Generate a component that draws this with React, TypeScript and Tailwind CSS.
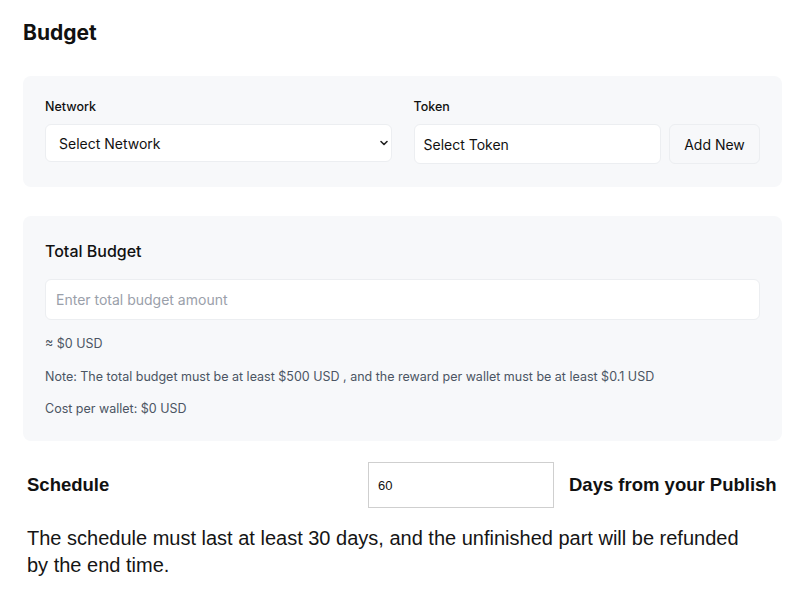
import React, { useState } from 'react';

const App: React.FC = () => {
  const [days, setDays] = useState('60');

  return (
    <div className="min-h-screen bg-white pl-[23px] pr-[17px] pt-[19px] text-[#111] font-['Inter',sans-serif]">
      <h1 className="text-[21px] leading-[28px] font-bold">Budget</h1>

      <div className="mt-[29px] rounded-lg bg-[#f7f8fa] px-[22px] pt-[23px] pb-[23px]">
        <div className="grid grid-cols-2 gap-[22px]">
          <div>
            <label className="block text-[12.5px] leading-4 font-medium mb-[9px]">Network</label>
            <div className="relative">
              <select className="w-full h-[38px] appearance-none rounded-md border border-[#eceef1] bg-white pl-[13px] pr-8 text-[14px] text-[#111] outline-none">
                <option>Select Network</option>
              </select>
              <svg className="pointer-events-none absolute right-[3px] top-1/2 -translate-y-1/2" width="10" height="10" viewBox="0 0 10 10" fill="none">
                <path d="M2 3.5 L5 6.5 L8 3.5" stroke="#222" strokeWidth="1.6" strokeLinecap="round" strokeLinejoin="round" />
              </svg>
            </div>
          </div>
          <div>
            <label className="block text-[12.5px] leading-4 font-medium mb-[9px]">Token</label>
            <div className="flex gap-[8px]">
              <div className="flex-1 h-[40px] flex items-center rounded-md border border-[#eceef1] bg-white px-[9px] text-[14px]">Select Token</div>
              <button className="w-[91px] h-[40px] rounded-md border border-[#eceef1] bg-[#f7f8fa] text-[14px]">Add New</button>
            </div>
          </div>
        </div>
      </div>

      <div className="mt-[29px] rounded-lg bg-[#f7f8fa] px-[22px] pt-[23px] pb-[24px]">
        <h2 className="text-[16px] leading-6 font-medium">Total Budget</h2>
        <input
          className="mt-[16px] w-full h-[41px] rounded-md border border-[#eceef1] bg-white px-[10px] text-[14px] outline-none placeholder:text-[#9aa0aa]"
          placeholder="Enter total budget amount"
        />
        <p className="mt-[16px] text-[12.5px] leading-4 text-[#4b5563]">≈ $0 USD</p>
        <p className="mt-[17px] text-[12.5px] leading-4 text-[#4b5563]">
          Note: The total budget must be at least $500 USD , and the reward per wallet must be at least $0.1 USD
        </p>
        <p className="mt-[16px] text-[12.5px] leading-4 text-[#4b5563]">Cost per wallet: $0 USD</p>
      </div>

      <div className="mt-[21px] pl-[4px] flex items-center font-['Liberation_Sans',Arial,sans-serif]">
        <span className="w-[341px] text-[18.5px] font-bold">Schedule</span>
        <input
          value={days}
          onChange={(e) => setDays(e.target.value)}
          className="w-[186px] h-[46px] border border-[#cfcfcf] bg-white px-[9px] text-[13px] outline-none"
        />
        <span className="ml-[15px] text-[18.5px] font-bold">Days from your Publish</span>
      </div>

      <p className="mt-[17px] pl-[4px] w-[725px] text-[20px] leading-[27px] text-[#151515] font-['Liberation_Sans',Arial,sans-serif]">
        The schedule must last at least 30 days, and the unfinished part will be refunded by the end time.
      </p>
    </div>
  );
};

export default App;
